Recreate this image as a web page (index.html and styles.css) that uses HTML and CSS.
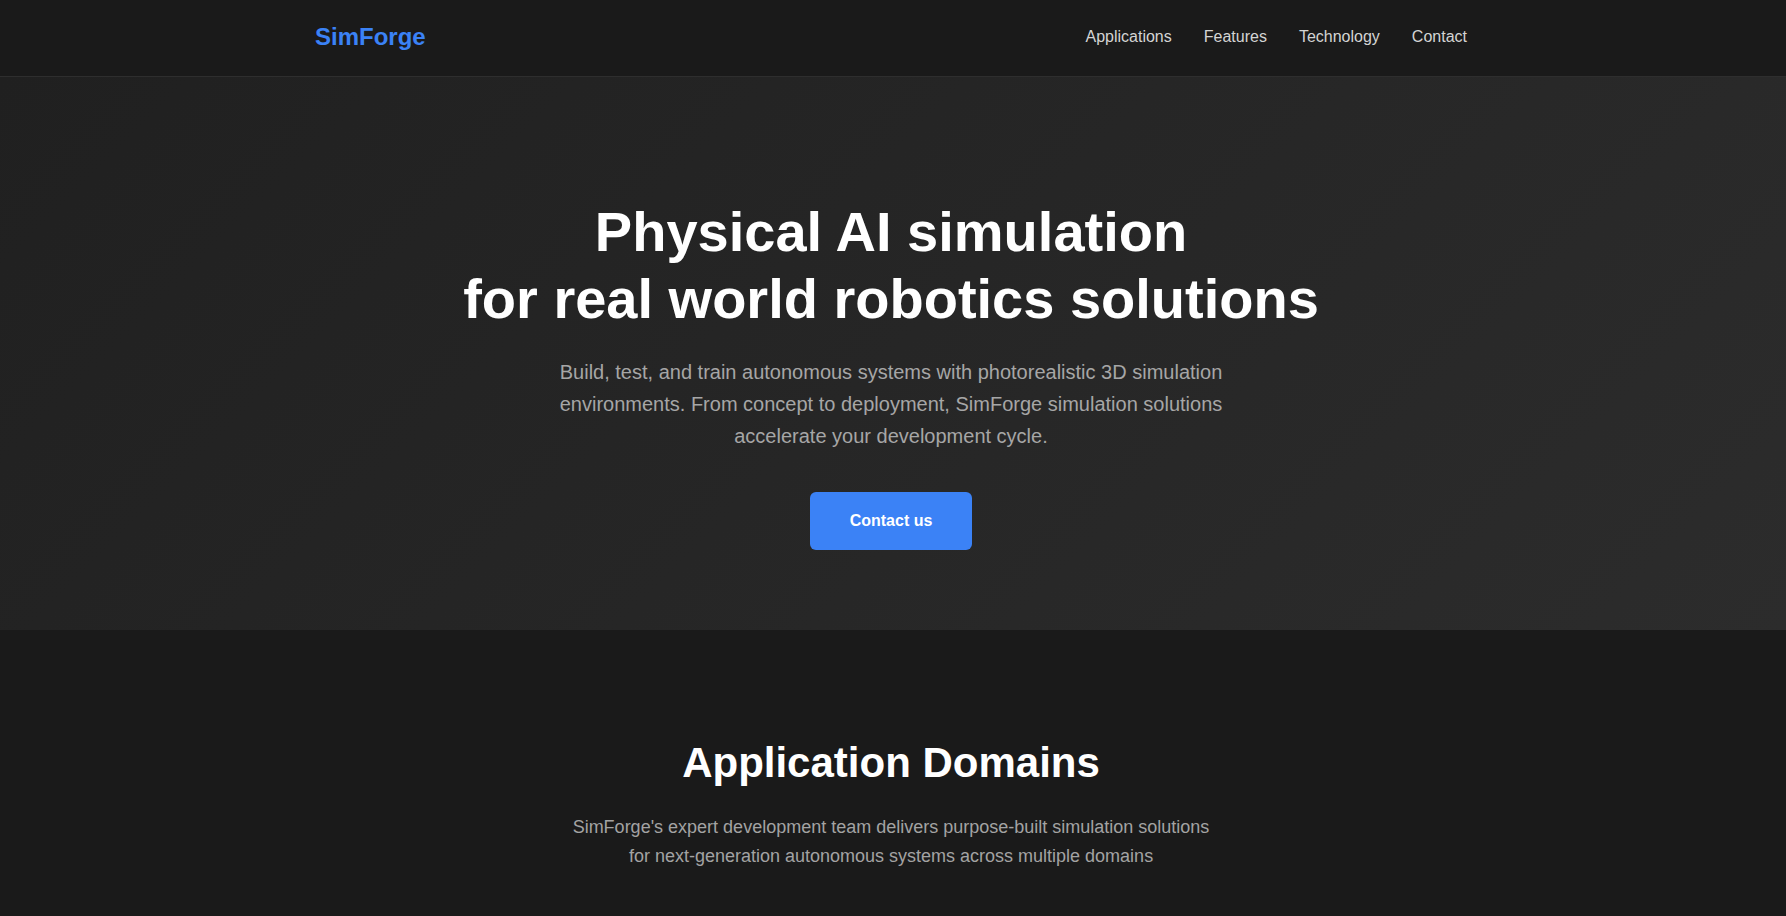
FILE: index.html
```html
<!DOCTYPE html>
<html lang="en">
<head>
<meta charset="utf-8">
<title>SimForge — Physical AI simulation</title>
<link rel="stylesheet" href="styles.css">
</head>
<body>
<header class="site-header band">
  <div class="container header-inner">
    <a class="logo" href="#">SimForge</a>
    <nav class="main-nav">
      <a href="#applications">Applications</a>
      <a href="#features">Features</a>
      <a href="#technology">Technology</a>
      <a href="#contact">Contact</a>
    </nav>
  </div>
</header>

<section class="hero band">
  <div class="container hero-inner">
    <h1 class="hero-title">Physical AI simulation<br>for real world robotics solutions</h1>
    <p class="hero-text">Build, test, and train autonomous systems with photorealistic 3D simulation environments. From concept to deployment, SimForge simulation solutions accelerate your development cycle.</p>
    <a class="btn-primary" href="#contact">Contact us</a>
  </div>
</section>

<section class="domains band" id="applications">
  <div class="container domains-inner">
    <h2 class="section-title">Application Domains</h2>
    <p class="section-text">SimForge's expert development team delivers purpose-built simulation solutions for next-generation autonomous systems across multiple domains</p>
  </div>
</section>
</body>
</html>
```

FILE: styles.css
```css
* {
  box-sizing: border-box;
}

html, body {
  margin: 0;
  padding: 0;
}

body {
  background: #1a1a1a;
  color: #ffffff;
  font-family: "Liberation Sans", Arial, sans-serif;
  min-height: 100vh;
}

a {
  text-decoration: none;
}

/* Full-width bands keep a small gutter on the right edge */
.band {
  padding-right: 4px;
}

.container {
  max-width: 1200px;
  margin: 0 auto;
  padding: 0 24px;
}

/* Top bar */
.site-header {
  background: #1a1a1a;
  border-bottom: 1px solid #2e2e2e;
  padding-top: 23px;
  padding-bottom: 25px;
}

.header-inner {
  display: flex;
  align-items: center;
  justify-content: space-between;
  height: 28px;
}

.logo {
  color: #3b82f6;
  font-size: 24px;
  font-weight: 700;
  line-height: 28px;
}

.main-nav {
  display: flex;
  gap: 32px;
}

.main-nav a {
  color: #d4d4d4;
  font-size: 16px;
  line-height: 20px;
}

/* Hero */
.hero {
  background: linear-gradient(135deg, #202020 0%, #262626 50%, #2c2c2c 100%);
  padding-top: 121px;
  padding-bottom: 80px;
}

.hero-inner {
  display: flex;
  flex-direction: column;
  align-items: center;
  text-align: center;
}

.hero-title {
  margin: 0 0 24px;
  font-size: 56px;
  line-height: 1.2;
  font-weight: 700;
  color: #ffffff;
}

.hero-text {
  margin: 0 0 40px;
  max-width: 700px;
  font-size: 20px;
  line-height: 1.6;
  color: #a6a6a6;
}

.btn-primary {
  display: inline-block;
  background: #3b82f6;
  color: #ffffff;
  font-size: 16px;
  font-weight: 700;
  line-height: 20px;
  padding: 19px 40px;
  border-radius: 6px;
}

/* Application domains */
.domains {
  background: #1a1a1a;
  padding-top: 108px;
  padding-bottom: 80px;
}

.domains-inner {
  display: flex;
  flex-direction: column;
  align-items: center;
  text-align: center;
}

.section-title {
  margin: 0 0 24px;
  font-size: 42px;
  line-height: 1.2;
  font-weight: 700;
  color: #ffffff;
}

.section-text {
  margin: 0;
  max-width: 648px;
  font-size: 18px;
  line-height: 1.6;
  color: #a3a3a3;
}
```
